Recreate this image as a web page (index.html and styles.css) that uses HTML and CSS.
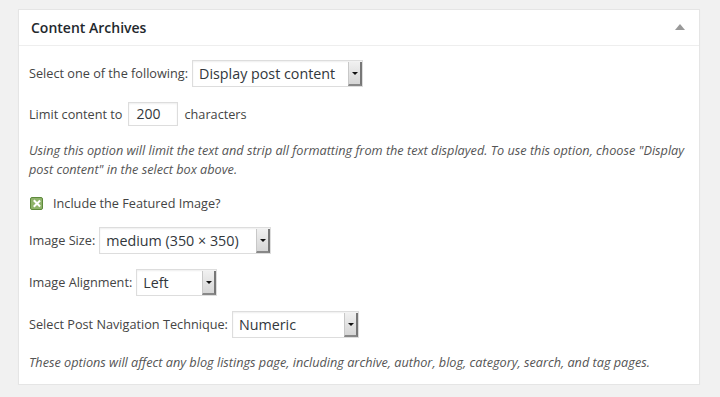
FILE: index.html
```html
<!doctype html>
<html>

<head>
    <meta charset="UTF-8">
    <title>Content Archives</title>
    <link rel="stylesheet" href="styles.css">
</head>

<body>
    <div class="postbox">
        <div class="hndle">
            <h3>Content Archives</h3>
            <span class="toggle"></span>
        </div>
        <div class="inside">
            <p class="row">
                <label>Select one of the following:</label>
                <span class="select w-content"><span class="val">Display post content</span><span class="btn"></span></span>
            </p>
            <p class="row">
                <label>Limit content to</label>
                <span class="text-input">200</span>
                <label>characters</label>
            </p>
            <p class="desc">Using this option will limit the text and strip all formatting from the text displayed. To use this option, choose "Display post content" in the select box above.</p>
            <p class="row check">
                <span class="checkbox"></span>
                <label>Include the Featured Image?</label>
            </p>
            <p class="row">
                <label>Image Size:</label>
                <span class="select w-size"><span class="val">medium (350 × 350)</span><span class="btn"></span></span>
            </p>
            <p class="row">
                <label>Image Alignment:</label>
                <span class="select w-align"><span class="val">Left</span><span class="btn"></span></span>
            </p>
            <p class="row">
                <label>Select Post Navigation Technique:</label>
                <span class="select w-nav"><span class="val">Numeric</span><span class="btn"></span></span>
            </p>
            <p class="desc last">These options will affect any blog listings page, including archive, author, blog, category, search, and tag pages.</p>
        </div>
    </div>
</body>

</html>
```

FILE: styles.css
```css
* {
    box-sizing: border-box;
}
body {
    margin: 0;
    padding: 9px 20px 0 18px;
    background-color: #f1f1f1;
    font-family: "Open Sans", sans-serif;
    font-size: 12.7px;
    color: #444;
}
.postbox {
    background-color: #fff;
    border: solid 1px #e5e5e5;
    box-shadow: 0 1px 1px rgba(0, 0, 0, 0.04);
}
.hndle {
    display: flex;
    align-items: center;
    justify-content: space-between;
    height: 36px;
    padding: 0 14px 0 12px;
    border-bottom: solid 1px #eee;
}
.hndle h3 {
    margin: 0;
    font-size: 14px;
    font-weight: 600;
    color: #23282d;
}
.toggle {
    width: 0;
    height: 0;
    border-left: 5px solid transparent;
    border-right: 5px solid transparent;
    border-bottom: 6px solid #999;
    margin-top: -2px;
}
.inside {
    padding: 14px 11px 12px 10px;
}
.row {
    display: flex;
    align-items: center;
    gap: 4px;
    margin: 0 0 15px;
    line-height: 19px;
}
.row label {
    white-space: nowrap;
}

/** listes déroulantes */
.select {
    display: flex;
    align-items: stretch;
    height: 27px;
    border: solid 1px #ddd;
    background-color: #fff;
    box-shadow: inset 0 1px 2px rgba(0, 0, 0, 0.07);
    font-size: 14.3px;
    color: #32373c;
}
.select .val {
    flex: 1;
    padding: 0 6px;
    line-height: 25px;
    white-space: nowrap;
}
.select .btn {
    position: relative;
    width: 14px;
    margin: 1px 0 0;
    background: linear-gradient(#f0f0f0, #d6d6d6);
    border-left: solid 1px #c8c8c8;
    border-right: solid 2px #777;
    border-bottom: solid 2px #888;
}
.select .btn::after {
    content: "";
    position: absolute;
    left: 3px;
    top: 10px;
    border-left: 3px solid transparent;
    border-right: 3px solid transparent;
    border-top: 3px solid #111;
}
.w-content { width: 171px; }
.w-size { width: 172px; }
.w-align { width: 81px; }
.w-nav { width: 127px; }

.text-input {
    width: 50px;
    height: 24px;
    margin: 0 2px;
    border: solid 1px #ddd;
    box-shadow: inset 0 1px 2px rgba(0, 0, 0, 0.07);
    padding: 0 7px;
    line-height: 22px;
    font-size: 14px;
    color: #32373c;
}

.desc {
    margin: 0 0 15px;
    font-style: italic;
    line-height: 19px;
    color: #555;
}
.desc.last {
    margin-bottom: 0;
}

/** case à cocher */
.check {
    gap: 10px;
    margin-bottom: 14px;
}
.checkbox {
    position: relative;
    width: 13px;
    height: 13px;
    margin-left: 1px;
    background-color: #8fb36b;
    border: solid 1px #5e8a3c;
    border-radius: 2px;
}
.checkbox::before, .checkbox::after {
    content: "";
    position: absolute;
    left: 5px;
    top: 1px;
    width: 1.6px;
    height: 9px;
    background-color: #fff;
    transform: rotate(45deg);
}
.checkbox::after {
    transform: rotate(-45deg);
}
```
